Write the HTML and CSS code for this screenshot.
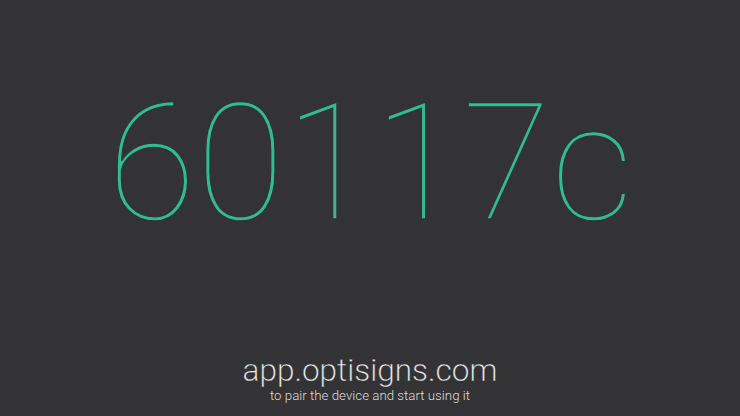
FILE: index.html
```html
<!DOCTYPE html>
<html>
<head>
<meta charset="utf-8">
<link rel="stylesheet" href="styles.css">
</head>
<body>
<div class="screen">
  <div class="code">60117c</div>
  <div class="footer">
    <div class="url">app.optisigns.com</div>
    <div class="hint">to pair the device and start using it</div>
  </div>
</div>
</body>
</html>
```
FILE: styles.css
```css
html, body {
  margin: 0;
  padding: 0;
  width: 740px;
  height: 416px;
  overflow: hidden;
  background: #333234;
  font-family: "Roboto Thin", Roboto, "Noto Sans", sans-serif;
}
.screen {
  width: 740px;
  height: 416px;
  display: flex;
  flex-direction: column;
  align-items: center;
}
.code {
  margin-top: 64px;
  font-size: 163px;
  font-weight: 100;
  line-height: 200px;
  color: #30bc90;
  letter-spacing: -0.5px;
  -webkit-text-stroke: 1.3px #333234;
}
.footer {
  margin-top: auto;
  margin-bottom: 12px;
  display: flex;
  flex-direction: column;
  align-items: center;
}
.url {
  font-family: "Roboto Light", Roboto, sans-serif;
  font-size: 31.5px;
  font-weight: 200;
  color: #f4f4f4;
  line-height: 34px;
  -webkit-text-stroke: 0.35px #333234;
}
.hint {
  font-family: "Roboto Light", Roboto, sans-serif;
  font-size: 13.3px;
  font-weight: 200;
  color: #dcdcdc;
  line-height: 16px;
}
```
